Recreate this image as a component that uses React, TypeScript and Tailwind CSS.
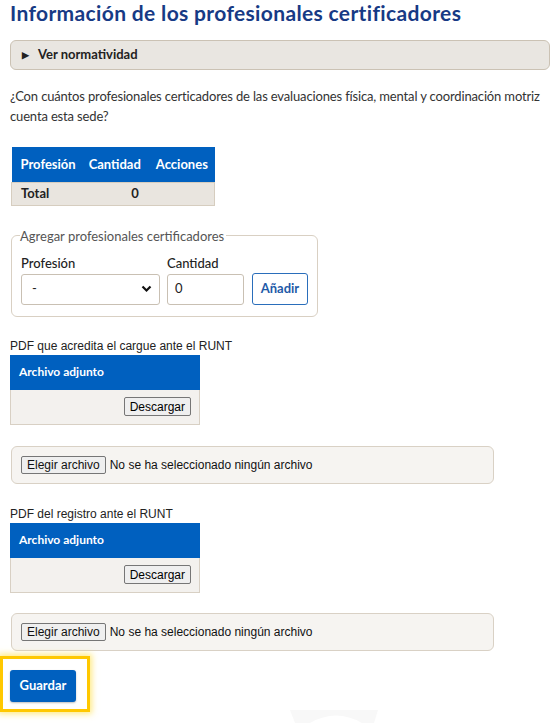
import React from 'react';

const ui = { fontFamily: 'Lato, "Open Sans", Arial, sans-serif' };
const native = { fontFamily: '"Liberation Sans", Arial, sans-serif' };

const Attachment: React.FC<{ label: string }> = ({ label }) => (
  <div>
    <p className="text-[12px] leading-[18px] text-[#222]" style={native}>
      {label}
    </p>
    <div className="w-[190px]">
      <div className="h-[35px] bg-[#0060bf] flex items-center px-[9px] text-white text-[12px] font-bold">
        Archivo adjunto
      </div>
      <div className="h-[35px] bg-[#f3f1ee] border border-t-0 border-[#d8d0c4] flex items-center justify-end pr-[8px]">
        <button
          className="h-[19px] px-[5px] bg-[#efefef] border border-[#767676] rounded-[2px] text-[12px] leading-none text-black"
          style={native}
        >
          Descargar
        </button>
      </div>
    </div>
  </div>
);

const FileBox: React.FC = () => (
  <div
    className="w-[483px] h-[38px] ml-[1px] bg-[#f6f4f1] border border-[#d9d1c5] rounded-[6px] flex items-center pl-[9px] text-[12px] text-[#111]"
    style={native}
  >
    <button className="h-[18px] px-[5px] bg-[#efefef] border border-[#767676] rounded-[2px] leading-none mr-[4px]">
      Elegir archivo
    </button>
    <span>No se ha seleccionado ningún archivo</span>
  </div>
);

export default function App() {
  return (
    <div className="relative w-[550px] h-[723px] overflow-hidden bg-white pl-[10px]" style={ui}>
      <h1 className="text-[21px] leading-[26px] tracking-[0.35px] font-bold text-[#173a85] whitespace-nowrap">
        Información de los profesionales certificadores
      </h1>

      <div className="mt-[14px] w-[540px] h-[30px] bg-[#e9e6e1] border border-[#cbc2b4] rounded-[6px] flex items-center pl-[11px] text-[13px] font-bold text-[#222]">
        <span className="text-[9px] mr-[9px]">▶</span>
        Ver normatividad
      </div>

      <p className="mt-[16px] text-[13px] leading-[20px] tracking-[-0.15px] text-[#333]">
        ¿Con cuántos profesionales certicadores de las evaluaciones física, mental y coordinación motriz cuenta esta sede?
      </p>

      <table className="mt-[21px] ml-[1px] text-[13px] border-collapse">
        <thead>
          <tr className="h-[35px] bg-[#0060bf] text-white">
            <th className="text-left pl-[9px] pr-[6px] font-bold">Profesión</th>
            <th className="text-left pl-[7px] pr-[7px] font-bold">Cantidad</th>
            <th className="text-left pl-[8px] pr-[7px] font-bold">Acciones</th>
          </tr>
        </thead>
        <tbody>
          <tr className="h-[23px] bg-[#e9e5df] border border-[#d6cdbf] font-bold text-[#222]">
            <td className="pl-[9px]">Total</td>
            <td className="text-right pr-[9px]">0</td>
            <td></td>
          </tr>
        </tbody>
      </table>

      <fieldset className="mt-[22px] ml-[1px] w-[307px] border border-[#d9d0c3] rounded-[6px] px-[9px] pb-[11px]">
        <legend className="text-[13px] leading-[16px] text-[#555] pr-[2px] -ml-[1px]">
          Agregar profesionales certificadores
        </legend>
        <div className="flex items-end mt-[11px]">
          <div className="flex flex-col">
            <label className="text-[13px] leading-[16px] text-[#222] font-medium mb-[3px]">Profesión</label>
            <div className="w-[139px] h-[31px] border border-[#c9c0b3] rounded-[3px] bg-white flex items-center justify-between pl-[10px] pr-[7px] text-[13px] text-[#222]">
              <span>-</span>
              <svg width="11" height="8" viewBox="0 0 11 8">
                <path d="M1.5 1.5 L5.5 5.5 L9.5 1.5" fill="none" stroke="#111" strokeWidth="2.2" />
              </svg>
            </div>
          </div>
          <div className="flex flex-col ml-[7px]">
            <label className="text-[13px] leading-[16px] text-[#222] font-medium mb-[3px]">Cantidad</label>
            <div className="w-[77px] h-[31px] border border-[#c9c0b3] rounded-[3px] bg-white flex items-center pl-[7px] text-[13px] text-[#222]">
              0
            </div>
          </div>
          <button className="ml-[8px] w-[56px] h-[32px] border border-[#2a6ebb] rounded-[3px] bg-white text-[#1e5aa8] text-[13px] font-bold">
            Añadir
          </button>
        </div>
      </fieldset>

      <div className="mt-[20px]">
        <Attachment label="PDF que acredita el cargue ante el RUNT" />
      </div>
      <div className="mt-[21px]">
        <FileBox />
      </div>

      <div className="mt-[21px]">
        <Attachment label="PDF del registro ante el RUNT" />
      </div>
      <div className="mt-[20px]">
        <FileBox />
      </div>

      <div className="mt-[5px] -ml-[10px] w-[90px] h-[56px] border-[3px] border-[#ffc800] shadow-[0_0_6px_2px_rgba(255,225,80,0.7)] pl-[7px] pt-[11px]">
        <button className="w-[66px] h-[32px] bg-[#0060bf] rounded-[3px] text-white text-[13px] font-bold shadow-[0_1px_2px_rgba(0,0,0,0.25)]">
          Guardar
        </button>
      </div>

      <svg className="absolute left-[290px] top-[710px]" width="90" height="13" viewBox="0 0 90 13">
        <path d="M0 0 H88 L84 13 H72 Q46 -2 20 13 H5 Z" fill="#f8f8f8" />
      </svg>
    </div>
  );
}
